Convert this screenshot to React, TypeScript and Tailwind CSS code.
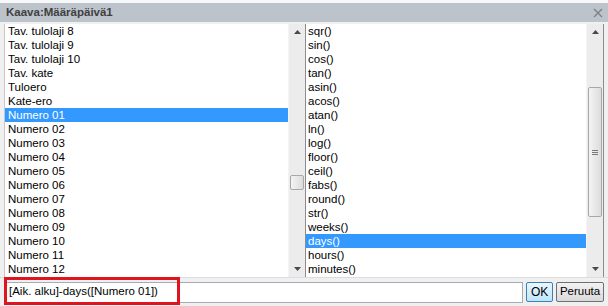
import React from "react";

const leftItems = [
  "Tav. tulolaji 8",
  "Tav. tulolaji 9",
  "Tav. tulolaji 10",
  "Tav. kate",
  "Tuloero",
  "Kate-ero",
  "Numero 01",
  "Numero 02",
  "Numero 03",
  "Numero 04",
  "Numero 05",
  "Numero 06",
  "Numero 07",
  "Numero 08",
  "Numero 09",
  "Numero 10",
  "Numero 11",
  "Numero 12",
];

const rightItems = [
  "sqr()",
  "sin()",
  "cos()",
  "tan()",
  "asin()",
  "acos()",
  "atan()",
  "ln()",
  "log()",
  "floor()",
  "ceil()",
  "fabs()",
  "round()",
  "str()",
  "weeks()",
  "days()",
  "hours()",
  "minutes()",
];

function Up() {
  return (
    <svg width="7" height="4" viewBox="0 0 7 4">
      <path d="M0 4 L3.5 0 L7 4 Z" fill="#4a4a4a" />
    </svg>
  );
}
function Down() {
  return (
    <svg width="7" height="4" viewBox="0 0 7 4">
      <path d="M0 0 L3.5 4 L7 0 Z" fill="#4a4a4a" />
    </svg>
  );
}

function List({
  items,
  selected,
  padLeft,
  thumbTop,
  thumbHeight,
  grip,
}: {
  items: string[];
  selected: number;
  padLeft: string;
  thumbTop: number;
  thumbHeight: number;
  grip: boolean;
}) {
  return (
    <div className="flex flex-1 h-full bg-white">
      <div className="flex-1 flex flex-col pt-[0px]">
        {items.map((t, i) => (
          <div
            key={t}
            className={
              "h-[14px] leading-[14px] text-[11.5px] " +
              padLeft +
              (i === selected ? " bg-[#3399ff] text-white" : " text-black")
            }
          >
            {t}
          </div>
        ))}
      </div>
      <div className="w-[17px] h-full bg-[#ececec] border-l border-[#f4f4f4] relative flex flex-col items-center justify-between py-[6px]">
        <Up />
        <Down />
        <div
          className="absolute left-[1px] w-[14px] rounded-[2px] border border-[#a8a8a8] bg-gradient-to-r from-[#f4f4f4] to-[#dcdcdc] flex items-center justify-center"
          style={{ top: thumbTop, height: thumbHeight }}
        >
          {grip && (
            <div className="flex flex-col gap-[1px]">
              <div className="w-[6px] h-px bg-[#7a7a7a]" />
              <div className="w-[6px] h-px bg-[#7a7a7a]" />
              <div className="w-[6px] h-px bg-[#7a7a7a]" />
            </div>
          )}
        </div>
      </div>
    </div>
  );
}

export default function App() {
  return (
    <div
      className="w-[608px] h-[306px] bg-[#f0f0f0] relative overflow-hidden flex flex-col"
      style={{ fontFamily: '"Liberation Sans", Arial, sans-serif' }}
    >
      <div className="h-[3px] bg-[#f7f8f9] shrink-0" />
      <div className="h-[19px] shrink-0 bg-[#bdc3cb] flex items-center justify-between pl-[6px] pr-[5px]">
        <span className="text-[11.5px] font-bold text-[#404040]">Kaava:Määräpäivä1</span>
        <svg width="10" height="10" viewBox="0 0 10 10">
          <path d="M1 1 L9 9 M9 1 L1 9" stroke="#7d8288" strokeWidth="1.4" />
        </svg>
      </div>
      <div className="h-[2px] shrink-0 bg-[#eef0f2]" />
      <div className="h-[253px] shrink-0 flex pl-[4px] pr-[4px]">
        <div className="w-[301px] h-full border-l border-[#c8c8c8] flex">
          <List
            items={leftItems}
            selected={6}
            padLeft="pl-[3px]"
            thumbTop={151}
            thumbHeight={15}
            grip={false}
          />
        </div>
        <div className="flex-1 h-full border-l border-r border-[#8c8c8c] flex">
          <List
            items={rightItems}
            selected={15}
            padLeft="pl-[2px]"
            thumbTop={63}
            thumbHeight={130}
            grip={true}
          />
        </div>
      </div>
      <div className="flex-1 flex items-center pl-[4px] pr-[4px] gap-[2px] border-t border-[#dcdcdc]">
        <div className="w-[520px] h-[21px] bg-white border border-[#a5acb5] flex items-center pl-[4px] text-[11.5px] text-black">
          [Aik. alku]-days([Numero 01])
        </div>
        <div className="w-[27px] h-[20px] ml-[1px] rounded-[2px] border border-[#3c7fb1] bg-gradient-to-b from-[#eaf6fd] to-[#bee6fd] flex items-center justify-center text-[12px] text-black">
          OK
        </div>
        <div className="w-[48px] h-[20px] ml-[1px] rounded-[2px] border border-[#707070] bg-gradient-to-b from-[#f2f2f2] to-[#dadada] flex items-center justify-center text-[11.5px] text-black">
          Peruuta
        </div>
      </div>
      <div className="absolute left-[4px] top-[277px] w-[176px] h-[28px] border-[3px] border-[#e0141e]" />
    </div>
  );
}
